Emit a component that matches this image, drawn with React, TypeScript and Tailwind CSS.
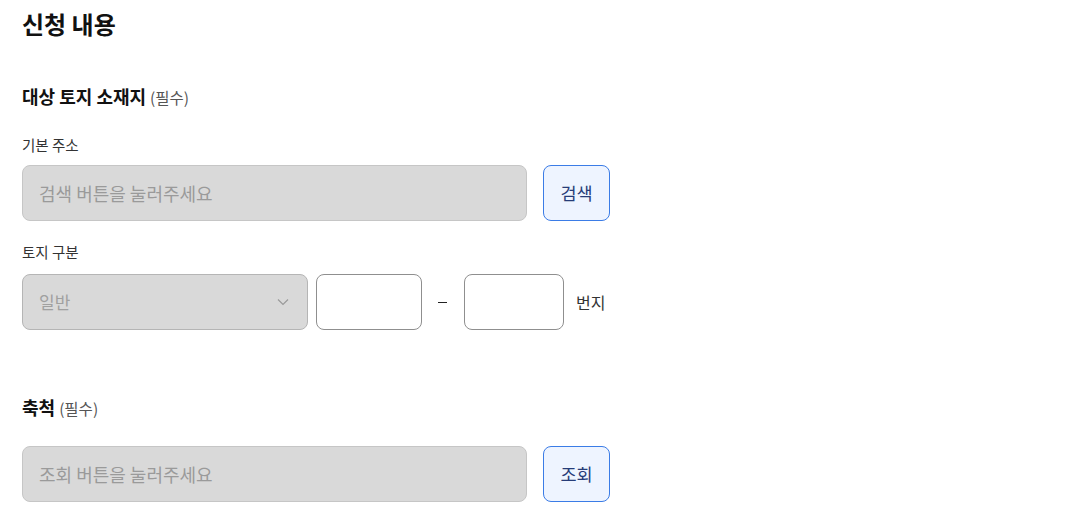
import React from 'react';

const font = { fontFamily: '"Noto Sans CJK KR", "Noto Sans", sans-serif' };

const SectionTitle = ({ title }: { title: string }) => (
  <div className="flex items-baseline leading-[24px]">
    <span className="text-[18px] font-bold text-[#111]">{title}</span>
    <span className="ml-1 text-[15.5px] text-[#555]">(필수)</span>
  </div>
);

const ReadonlyField = ({ placeholder, action }: { placeholder: string; action: string }) => (
  <div className="flex items-center">
    <div className="flex h-[56px] w-[505px] items-center rounded-[8px] border border-[#c6c6c6] bg-[#d9d9d9] px-[16px] text-[18px] text-[#9a9a9a]">
      {placeholder}
    </div>
    <button className="ml-[16px] flex h-[56px] w-[67px] items-center justify-center rounded-[8px] border border-[#3b7ce6] bg-[#eef4ff] text-[17.5px] text-[#263c78]">
      {action}
    </button>
  </div>
);

export default function App() {
  return (
    <div className="min-h-screen bg-white pl-[22px]" style={font}>
      <h1 className="pt-[8px] text-[24px] font-bold leading-[32px] text-[#111]">신청 내용</h1>

      <div className="mt-[44px]">
        <SectionTitle title="대상 토지 소재지" />
      </div>

      <div className="mt-[26px] text-[14.5px] leading-[20px] text-[#333]">기본 주소</div>
      <div className="mt-[10px]">
        <ReadonlyField placeholder="검색 버튼을 눌러주세요" action="검색" />
      </div>

      <div className="mt-[21px] text-[14.5px] leading-[20px] text-[#333]">토지 구분</div>
      <div className="mt-[12px] flex items-center">
        <div className="flex h-[56px] w-[286px] items-center justify-between rounded-[8px] border border-[#b5b5b5] bg-[#d9d9d9] pl-[16px] pr-[18px] text-[17px] text-[#a0a0a0]">
          <span>일반</span>
          <svg width="12" height="8" viewBox="0 0 12 8" fill="none">
            <path d="M1 1.5l5 5 5-5" stroke="#9a9a9a" strokeWidth="1.2" />
          </svg>
        </div>
        <input className="ml-[8px] h-[56px] w-[106px] rounded-[8px] border border-[#8f8f8f] bg-white outline-none" />
        <span className="mx-[16px] block h-[1px] w-[9px] bg-[#222]" />
        <input className="ml-[1px] h-[56px] w-[100px] rounded-[8px] border border-[#8f8f8f] bg-white outline-none" />
        <span className="ml-[12px] text-[16px] text-[#333]">번지</span>
      </div>

      <div className="mt-[65px]">
        <SectionTitle title="축척" />
      </div>
      <div className="mt-[26px]">
        <ReadonlyField placeholder="조회 버튼을 눌러주세요" action="조회" />
      </div>
    </div>
  );
}
